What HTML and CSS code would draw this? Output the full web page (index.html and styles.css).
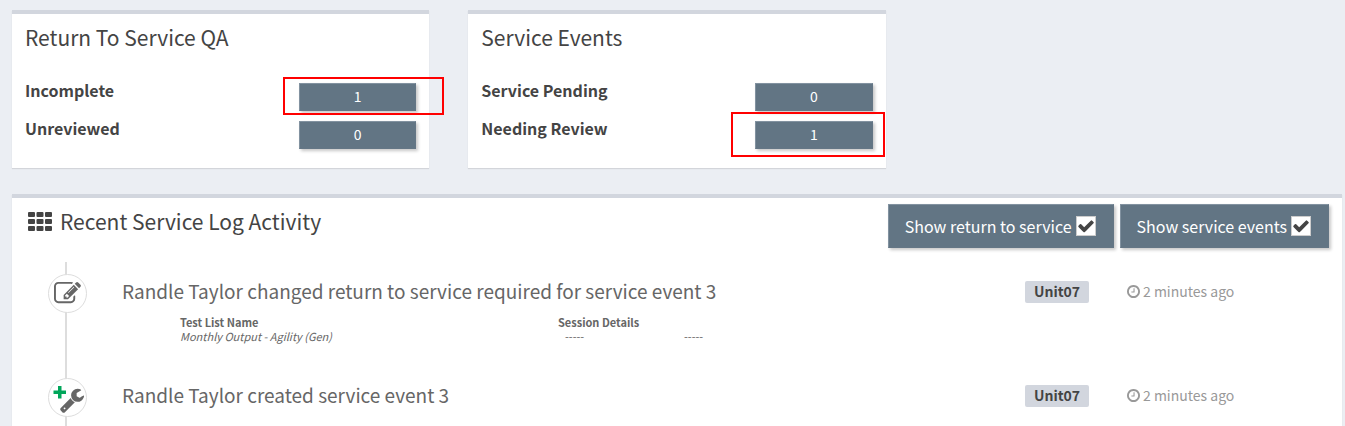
FILE: index.html
```html
<!DOCTYPE html>
<html lang="en">
<head>
<meta charset="utf-8">
<title>Service Log</title>
<link rel="stylesheet" href="styles.css">
</head>
<body>
<svg class="sprite" aria-hidden="true">
  <symbol id="check" viewBox="0 0 1792 1792"><path d="M1671 566q0 40-28 68l-724 724-136 136q-28 28-68 28t-68-28l-136-136-362-362q-28-28-28-68t28-68l136-136q28-28 68-28t68 28l294 295 656-657q28-28 68-28t68 28l136 136q28 28 28 68z"/></symbol>
  <symbol id="clock" viewBox="128 128 1536 1536"><path d="M1024 544v448q0 14-9 23t-23 9h-320q-14 0-23-9t-9-23v-64q0-14 9-23t23-9h224v-352q0-14 9-23t23-9h64q14 0 23 9t9 23zm416 352q0-148-73-273t-198-198-273-73-273 73-198 198-73 273 73 273 198 198 273 73 273-73 198-198 73-273zm224 0q0 209-103 385.500t-279.500 279.500-385.500 103-385.500-103-279.500-279.500-103-385.500 103-385.500 279.500-279.500 385.500-103 385.500 103 279.500 279.500 103 385.500z"/></symbol>
  <symbol id="edit" viewBox="0 0 1792 1792"><path d="M888 1184l116-116-152-152-116 116v56h96v96h56zm440-720q-16-16-33 1l-350 350q-17 17-1 33t33-1l350-350q17-17 1-33zm80 594v190q0 119-84.500 203.500t-203.500 84.500h-832q-119 0-203.500-84.500t-84.500-203.500v-832q0-119 84.500-203.500t203.500-84.500h832q63 0 117 25 15 7 18 23 3 17-9 29l-49 49q-14 14-32 8-23-6-45-6h-832q-66 0-113 47t-47 113v832q0 66 47 113t113 47h832q66 0 113-47t47-113v-126q0-13 9-22l64-64q15-15 35-7t20 29zm-96-738l288 288-672 672h-288v-288zm444 132l-92 92-288-288 92-92q28-28 68-28t68 28l152 152q28 28 28 68t-28 68z"/></symbol>
  <symbol id="wrench" viewBox="0 0 1792 1792"><path d="M448 1472q0-26-19-45t-45-19-45 19-19 45 19 45 45 19 45-19 19-45zm644-420l-682 682q-37 37-90 37-52 0-91-37l-106-108q-38-36-38-90 0-53 38-91l681-681q39 98 114.500 173.500t173.500 114.500zm634-435q0 39-23 106-47 134-164.500 217.500t-258.500 83.500q-185 0-316.500-131.500t-131.500-316.500 131.500-316.500 316.500-131.500q58 0 121.500 16.500t107.500 46.500q16 11 16 28t-16 28l-293 169v224l193 107q5-3 79-48.500t135.500-81 70.500-35.500q15 0 23.500 10t8.500 25z"/></symbol>
</svg>
<main class="page">
  <div class="summary">
    <section class="card">
      <h2 class="card-title">Return To Service QA</h2>
      <div class="stat"><span class="stat-label" id="incomplete">Incomplete</span><button class="count" type="button" aria-describedby="incomplete">1</button><span class="callout callout-incomplete"></span></div>
      <div class="stat"><span class="stat-label" id="unreviewed">Unreviewed</span><button class="count" type="button" aria-describedby="unreviewed">0</button></div>
    </section>
    <section class="card">
      <h2 class="card-title">Service Events</h2>
      <div class="stat"><span class="stat-label" id="pending">Service Pending</span><button class="count" type="button" aria-describedby="pending">0</button></div>
      <div class="stat"><span class="stat-label" id="review">Needing Review</span><button class="count" type="button" aria-describedby="review">1</button><span class="callout callout-review"></span></div>
    </section>
  </div>
  <section class="panel">
    <header class="panel-head">
      <h2 class="panel-title">
        <svg class="grid-icon" viewBox="0 0 24 19" aria-hidden="true"><rect width="7" height="5" rx="1"/><rect x="8.500" width="7" height="5" rx="1"/><rect x="17" width="7" height="5" rx="1"/><rect y="7" width="7" height="5" rx="1"/><rect x="8.500" y="7" width="7" height="5" rx="1"/><rect x="17" y="7" width="7" height="5" rx="1"/><rect y="14" width="7" height="5" rx="1"/><rect x="8.500" y="14" width="7" height="5" rx="1"/><rect x="17" y="14" width="7" height="5" rx="1"/></svg>
        Recent Service Log Activity
      </h2>
      <div class="filters">
        <label class="filter">Show return to service <span class="tick"><input class="tick-input" type="checkbox" checked><svg class="tick-mark"><use href="#check"/></svg></span></label>
        <label class="filter">Show service events <span class="tick"><input class="tick-input" type="checkbox" checked><svg class="tick-mark"><use href="#check"/></svg></span></label>
      </div>
    </header>
    <ul class="log">
      <li class="entry">
        <span class="marker"><svg class="edit-icon"><use href="#edit"/></svg></span>
        <div class="entry-body">
          <h3 class="entry-title">Randle Taylor changed return to service required for service event 3</h3>
          <table class="details">
            <thead><tr><th class="col-name">Test List Name</th><th class="col-session">Session Details</th><th></th></tr></thead>
            <tbody><tr><td class="list-name">Monthly Output - Agility (Gen)</td><td class="session">-----</td><td class="session">-----</td></tr></tbody>
          </table>
        </div>
        <div><span class="unit">Unit07</span></div>
        <span class="time"><svg class="clock-icon"><use href="#clock"/></svg>2 minutes ago</span>
      </li>
      <li class="entry">
        <span class="marker"><svg class="created-icon" viewBox="0 0 39 39"><path class="plus" d="M10 8h3.500v4.500H18v3.500h-4.500v4.500H10V16H5.500v-3.500H10z"/><use href="#wrench" x="11" y="9" width="26" height="26"/></svg></span>
        <div class="entry-body"><h3 class="entry-title">Randle Taylor created service event 3</h3></div>
        <div><span class="unit">Unit07</span></div>
        <span class="time"><svg class="clock-icon"><use href="#clock"/></svg>2 minutes ago</span>
      </li>
    </ul>
  </section>
</main>
</body>
</html>
```
FILE: styles.css
```css
* { box-sizing: border-box; }
body {
  margin: 0;
  background: #ebeef3;
  color: #444;
  font: 14px/20px "Source Sans Pro", "Noto Sans CJK SC", "Noto Sans", sans-serif;
}
h2, h3, ul { margin: 0; padding: 0; font-weight: 400; }
svg { fill: currentColor; flex: none; }
.sprite { position: absolute; width: 0; height: 0; }
.page {
  display: flex;
  flex-direction: column;
  gap: 26px;
  min-height: 100vh;
  padding: 10px 3px 0 12px;
}
.summary { display: grid; grid-template-columns: repeat(3, 1fr); column-gap: 39px; }
.card, .panel {
  background: #fff;
  border-top: 4px solid #d2d6de;
  box-shadow: 0 1px 1px rgba(0, 0, 0, .1);
}
.card { display: flex; flex-direction: column; gap: 10px; padding: 8px 13px 19px; }
.card-title { font-size: 21px; line-height: 30px; margin-bottom: 21px; }
.stat { position: relative; display: flex; justify-content: space-between; align-items: flex-start; }
.stat-label { font-size: 16px; line-height: 14px; font-weight: 700; }
.count, .filter {
  border: 1px solid #6f8391;
  border-color: #8292a0 #647685 #647685 #8292a0;
  background: #627584;
  color: #fff;
  box-shadow: 2px 2px 3px rgba(0, 0, 0, .22);
}
.count { width: 30%; height: 28px; padding: 0 0 2px; font: inherit; }
.callout { position: absolute; border: 2px solid #f00; pointer-events: none; }
.callout-incomplete { top: -6px; bottom: -4px; left: 258px; right: -28px; }
.callout-review { top: -9px; bottom: -8px; left: 250px; right: -12px; }
.panel { flex: 1; display: flex; flex-direction: column; }
.panel-head { display: flex; justify-content: space-between; padding: 6px 13px 14px 16px; }
.panel-title { display: flex; align-items: center; gap: 8px; height: 34px; font-size: 21px; }
.grid-icon { width: 24px; height: 19px; }
.filters { display: flex; gap: 6px; }
.filter { display: flex; align-items: center; gap: 4px; height: 44px; padding: 0 17px 0 16px; font-size: 16px; }
.tick { position: relative; display: block; width: 20px; height: 20px; }
.tick-input { appearance: none; display: block; width: 20px; height: 20px; margin: 0; border: 1px solid #ccc; background: #fff; }
.tick-mark { position: absolute; inset: 1px; width: 18px; height: 18px; fill: #444; pointer-events: none; visibility: hidden; }
.tick-input:checked + .tick-mark { visibility: visible; }
.log {
  flex: 1;
  list-style: none;
  padding: 12px 0 0 36px;
  background: linear-gradient(#ddd, #ddd) 53px 0 / 2px 100% no-repeat;
}
.entry { display: grid; grid-template-columns: 74px 1fr 102px 215px; min-height: 104px; color: #666; }
.entry:last-child { min-height: 0; }
.marker {
  display: flex;
  align-items: center;
  justify-content: center;
  width: 39px;
  height: 39px;
  border: 1px solid #ddd;
  border-radius: 50%;
  background: #fff;
}
.edit-icon { width: 27px; height: 27px; }
.created-icon { width: 39px; height: 39px; }
.plus { fill: #00a65a; }
.entry-title { font-size: 19px; line-height: 34px; }
.details { margin: 7px 0 0 58px; border-collapse: collapse; font-size: 11px; line-height: 14px; text-align: left; }
.details th, .details td { padding: 0; }
.col-name { width: 378px; }
.col-session { width: 119px; }
.list-name { font-style: italic; }
.details .session { padding-left: 7px; }
.unit {
  display: inline-block;
  margin-top: 7px;
  padding: 0 9px 2px;
  border-radius: 2px;
  background: #d2d6de;
  color: #444;
  font-weight: 700;
}
.time { display: flex; align-items: center; gap: 3px; height: 34px; color: #999; }
.clock-icon { width: 13px; height: 13px; }
```
